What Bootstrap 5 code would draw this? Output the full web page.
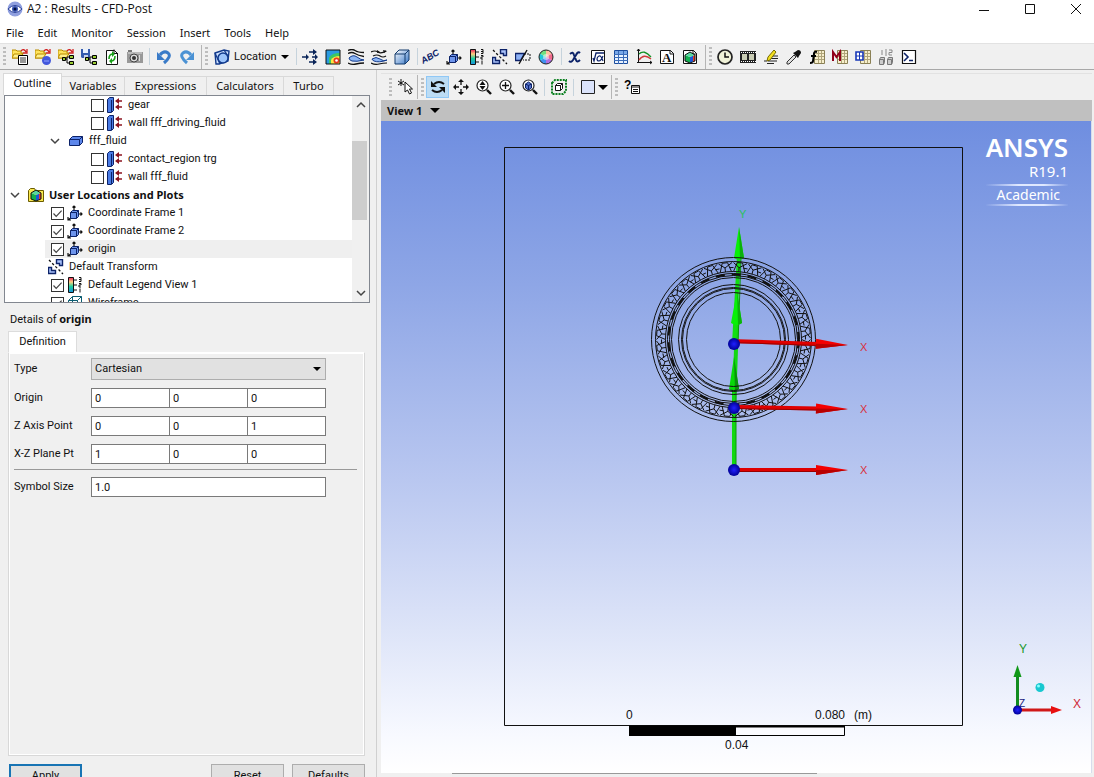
<!DOCTYPE html>
<html lang="en">
<head>
<meta charset="utf-8">
<meta name="viewport" content="width=device-width, initial-scale=1">
<title>A2 : Results - CFD-Post</title>
<link href="https://cdn.jsdelivr.net/npm/bootstrap@5.3.0/dist/css/bootstrap.min.css" rel="stylesheet">
<style>
body{font-family:Roboto,"Noto Sans",sans-serif;font-size:11px;line-height:18px;color:#111;background:#f0f0f0}
button,input,select{font:inherit;color:inherit}
strong,.boldface{font-family:"Noto Sans",sans-serif;font-weight:700}
.titlebar{height:20px;padding:0 8px 2px 7px;font-family:"Open Sans",sans-serif;font-size:12px}
.titlebar button{width:20px;height:16px}
.winbuttons{gap:26px}
.menubar{height:23px;padding:3px 0 0 6px;gap:15px;font-family:"Noto Sans",sans-serif}
.menubar a{color:#111;text-decoration:none}
.menubar{gap:14px}
.flat{border:0;background:none;padding:0;border-radius:0}
.toolbar{height:27px;border-top:1px solid #e2e2e2}
.maintools{border-bottom:1px solid #a8a8a8}
.grip{width:3px;height:19px;margin:0 2px 0 3px;background:repeating-linear-gradient(#bdbdbd 0 2px,transparent 2px 4px)}
.tool{width:23px;height:22px;display:flex;align-items:center;justify-content:center}
.tool svg,.treerow svg.ic{width:16px;height:16px;display:block;flex:none}
.tool.active-tool{background:#bcdcf4;border:1px solid #90c8f6}
.layoutbtn{gap:2px}
.sep{width:1px;height:17px;margin:0 2px 0 3px;background:#c6d3dc}
.edge{width:1px;height:24px;margin-left:3px;background:#b5b5b5}
.caret{width:0;height:0;border:5px solid transparent;border-top-color:#000;border-bottom:0}
.caret-sm{border-width:4px;border-bottom:0}
.leftpane{width:377px;padding:3px 5px 0 3px;border-right:1px solid #d0d0d0;flex:none}
.tabstrip{height:22px;font-family:"Noto Sans",sans-serif}
.tabstrip button{height:19px;border:1px solid #d9d9d9;border-left-width:0;border-bottom:0;background:#f0f0f0}
.tabstrip button.current{height:22px;background:#fff;border-left-width:1px;padding-bottom:3px}
.tree{height:208px;margin:0 1px;border:1px solid #828790;background:#fff;overflow:hidden}
.treerow{height:18px;white-space:nowrap}
.treerow svg.ic{margin:0 5px 0 3px}
.lv-root{padding-left:5px}.lv-group{padding-left:45px}.lv-leaf{padding-left:86px}.lv-item{padding-left:46px}.lv-free{padding-left:40px}
.chev{width:10px;height:10px;margin-right:5px;flex:none}
.selected-row{background:linear-gradient(90deg,transparent 40px,#efefef 40px)}
.treerow input{appearance:none;width:13px;height:13px;margin:0;border:1px solid #333;background:#fff;flex:none}
.treerow input:checked{background:#fff url("data:image/svg+xml,%3Csvg xmlns='http://www.w3.org/2000/svg' viewBox='0 0 11 11'%3E%3Cpath d='M1.5 5.5 4.2 8.3 9.6 2.6' fill='none' stroke='%23444' stroke-width='1.2'/%3E%3C/svg%3E")}
.scroller{width:17px;background:#f0f0f0;flex:none}
.scroller svg{width:10px;height:10px;margin:4px auto}
.thumb{width:15px;height:79px;margin-top:27px;background:#cdcdcd}
.detailhead{padding:7px 0 2px 7px}
.deftab{width:69px;height:21px;margin-left:5px;background:#fff;border:1px solid #dcdcdc;border-bottom:0}
.detailbox{margin:0 6px 0 5px;border:1px solid #d8d8d8;border-top-color:#fff;box-shadow:inset 1px 1px #fff,inset -1px -1px #fff;padding:5px 7px 0 5px}
.formrow{margin-bottom:8px;min-height:20px}
.formrow label{width:77px}
.fields{width:235px}
.fields input{height:20px;min-width:0;border:1px solid #7a7a7a;border-radius:0;padding:0 3px;background:#fff}
.fields input+input{margin-left:-1px}
.fields select{appearance:none;height:22px;width:100%;border:1px solid #adadad;border-radius:0;padding:0 3px;background:#e1e1e1}
.pick{right:5px;top:9px}
.rule{height:1px;background:#999;margin:-3px 0 7px}
.actions{height:21px;padding:8px 6px 0 6px;overflow:hidden;flex:none}
.actions button{width:73px;height:24px;border:1px solid #adadad;background:#e1e1e1;flex:none}
.actions .primary{border:2px solid #1874b4}
.rightpane{margin-left:4px;margin-right:2px;padding-top:3px}
.viewbar{height:21px;background:#c0c0c0;padding-left:6px}
.scene{background:linear-gradient(#6f8ee0 0%,#8ea6e6 25%,#b9c7f0 55%,#dde4f8 78%,#f7f9ff 94%,#fff 100%);border-right:1px solid #d8dcec;overflow:hidden}
.scene svg text{font-family:"Liberation Sans",sans-serif}
.brand{top:10px;right:23px;color:#fff;font-family:"Noto Sans",sans-serif;text-align:right}
.brand .bname{font-size:26px;font-weight:600;line-height:32px}
.brand .bver{font-size:15px;line-height:17px}
.brand .bedition{font-size:14px;line-height:18px;margin-top:4px;padding:0 8px;border:solid;border-width:2px 0;border-image:linear-gradient(90deg,transparent,#dfe8ff 40%,#dfe8ff 70%,transparent) 1}
.sheets{height:4px;background:linear-gradient(90deg,transparent 71px,#efefef 71px)}
.sheets div{margin-left:71px;width:365px;height:1px;background:#999}
</style>
</head>
<body class="vh-100 overflow-hidden d-flex flex-column">
<svg width="0" height="0" class="position-absolute" aria-hidden="true">
<defs>
<linearGradient id="rain" x2="0" y2="1"><stop stop-color="#e8205a"/><stop offset=".3" stop-color="#ffd080"/><stop offset=".6" stop-color="#20d0a0"/><stop offset="1" stop-color="#1890e0"/></linearGradient>
<linearGradient id="cubeg" x2="1" y2="1"><stop stop-color="#fff"/><stop offset="1" stop-color="#3878c8"/></linearGradient>
<symbol id="folder" viewBox="0 0 16 16"><path d="M0 9V1h4l1 1h4v2h2L8 9z" fill="#ffe45c" stroke="#b98b00"/><path d="M2 5h9L8 9H0z" fill="#fff08a" stroke="#b98b00"/><path d="M9 2q3-3 5 1M15 0v4h-4" fill="none" stroke="#d02020" stroke-width="1.3"/></symbol>
<symbol id="i-open" viewBox="0 0 16 16"><use href="#folder"/><path d="M6.500 6.500h9v9h-9z" fill="#fff" stroke="#000"/><path d="M8 9h6M8 11h6M8 13h6" stroke="#333"/></symbol>
<symbol id="i-openball" viewBox="0 0 16 16"><use href="#folder"/><circle cx="11.500" cy="11.500" r="4.500" fill="#4358dc"/><path d="M9 12h5" stroke="#93a4ff"/></symbol>
<symbol id="nodes" viewBox="0 0 16 16"><path d="M5 10h4M9 8v6M9 8h3M9 14h3" stroke="#000" fill="none"/><path d="M4.500 8.500h3v3h-3zM11.500 6.500h4v3h-4zM11.500 12.500h4v3h-4z" fill="#9c3" stroke="#000"/></symbol>
<symbol id="i-opentree" viewBox="0 0 16 16"><use href="#folder"/><use href="#nodes"/></symbol>
<symbol id="i-savetree" viewBox="0 0 16 16"><path d="M0 0h9v9H1L0 8z" fill="#355cae"/><path d="M2 0h5v4H2z" fill="#e9f2ff"/><path d="M3 6h4v3H3z" fill="#c8d4ea"/><use href="#nodes"/></symbol>
<symbol id="i-reload" viewBox="0 0 16 16"><path d="M2.500 1.500h8l3 3v11h-11z" fill="#fff" stroke="#111"/><path d="M10 .500v4h4" fill="none" stroke="#111"/><path d="M5 10q0-5 4-5M11 7q0 5-4 5" fill="none" stroke="#18a018" stroke-width="1.600"/><path d="M8 2l3 3-3 3zM8 9l-3 3 3 3z" fill="#18a018"/></symbol>
<symbol id="i-camera" viewBox="0 0 16 16"><path d="M0 3h16v11H0z" fill="#999"/><path d="M1 1h4v2H1z" fill="#777"/><path d="M1 4h14M12.500 6v6" stroke="#ddd"/><circle cx="7" cy="9" r="4" fill="#ddd" stroke="#444"/><circle cx="7" cy="9" r="2" fill="#333"/></symbol>
<symbol id="i-undo" viewBox="0 0 16 16"><path d="M4 6q4-5 8-2t-4 10" fill="none" stroke="#3a7bc8" stroke-width="3"/><path d="M1 3v8h8z" fill="#3a7bc8"/></symbol>
<symbol id="i-redo" viewBox="0 0 16 16"><path d="M12 6Q8 1 4 4t4 10" fill="none" stroke="#4b92d4" stroke-width="3"/><path d="M15 3v8H7z" fill="#4b92d4"/></symbol>
<symbol id="i-location" viewBox="0 0 16 16"><path d="M1 4l9-3 5 1-1 10-9 3H2z" fill="#cfe2ff" stroke="#123a8c" stroke-width="1.400"/><path d="M1 4l5 11M10 1l4 6" stroke="#123a8c" stroke-width="1.300"/><circle cx="9" cy="9" r="5" fill="#9cc4fa" stroke="#123a8c" stroke-width="1.500"/></symbol>
<symbol id="i-vector" viewBox="0 0 16 16"><path d="M0 8h5M7 3h5M10 8h4M7 13h5" stroke="#0a2458" stroke-width="1.600"/><path d="M4 5l3 3-3 3zM11 0l4 3-4 3zM13 5l3 3-3 3zM11 10l4 3-4 3z" fill="#0a2458"/></symbol>
<symbol id="i-contour" viewBox="0 0 16 16"><path d="M1 1h14v14H1z" fill="#2a9be0"/><path d="M4 15V9q2-5 11-5v11z" fill="#3cc860"/><path d="M6 15v-4q2-4 9-4v8z" fill="#ffe440"/><circle cx="11.500" cy="11.500" r="3" fill="#e83820"/><circle cx="11.500" cy="11.500" r="1.300" fill="#fff"/><path d="M1 1h14v14H1z" fill="none" stroke="#111"/></symbol>
<symbol id="i-stream" viewBox="0 0 16 16"><path d="M0 1.500q4-2 7 0t9 2M0 4.500q4-2 7 0t9 3M0 14q4 2 8 1t8-1" fill="none" stroke="#111" stroke-width="1.300"/><path d="M1 9q4-4 8-1t7 3q-8 2-12 1-3-1-3-3z" fill="#8db6f4" stroke="#123a8c"/></symbol>
<symbol id="i-particle" viewBox="0 0 16 16"><path d="M0 3q4-2 7 0t8-1M2 7q4-2 7 0t6 0M0 14q4 2 8 1t8-1" fill="none" stroke="#111" stroke-width="1.200"/><path d="M6 1l3 2-3 1zM12 1l4 1-3 2z" fill="#111"/><path d="M1 10q4-3 8 0t7 1q-8 3-13 1-2-1-2-2z" fill="#8db6f4" stroke="#123a8c"/></symbol>
<symbol id="i-volume" viewBox="0 0 16 16"><path d="M1 5l4-4h10v10l-4 4H1z" fill="url(#cubeg)" stroke="#123a6c"/><path d="M1 5h10v10M11 5l4-4" fill="none" stroke="#123a6c"/></symbol>
<symbol id="i-frame" viewBox="0 0 16 16"><path d="M7 6V1M10 9h5M5 12l-4 3M5.500 2.500L7 1l1.500 1.500M13.500 7.500L15 9l-1.500 1.500M1 12v3h3" fill="none" stroke="#111" stroke-width="1.200"/><path d="M3.500 7.500l2-2h6v6l-2 2h-6z" fill="#6d94ec" stroke="#0c2268"/><path d="M3.500 7.500h6v6M9.500 7.500l2-2" fill="none" stroke="#0c2268"/></symbol>
<symbol id="i-legend" viewBox="0 0 16 16"><path d="M1.500.500h5v15h-5z" fill="url(#rain)" stroke="#111"/><path d="M7 3h3M7 8h3M7 13h3M12 .500h2v4h-2M12 2.500h2M12 6.500h2v1.500h-2v2h2M13 11.500v4" stroke="#111" fill="none"/></symbol>
<symbol id="i-transform" viewBox="0 0 16 16"><path d="M1 1l14 14" stroke="#111" stroke-width="1.300" stroke-dasharray="2.500 2"/><path d="M8.500.500h6v6h-3v-2h-3zM.500 8.500h3v3h4v3h-7z" fill="#a9c2fa" stroke="#0c2268" stroke-width="1.400"/></symbol>
<symbol id="i-clip" viewBox="0 0 16 16"><path d="M9 5h6v6H8" fill="none" stroke="#111" stroke-dasharray="2 1"/><path d="M.500 4.500h9l-4 7h-5z" fill="#8cb0f4" stroke="#0c2268" stroke-width="1.300"/><path d="M12 1L4 15" stroke="#111" stroke-width="1.400"/></symbol>
<symbol id="i-color" viewBox="0 0 16 16"><path d="M8 8V1a7 7 0 0 1 6 3.500z" fill="#ffc0a0"/><path d="M8 8l6-3.500a7 7 0 0 1 0 7z" fill="#f26a8c"/><path d="M8 8l6 3.500A7 7 0 0 1 8 15z" fill="#b070e0"/><path d="M8 8v7a7 7 0 0 1-6-3.500z" fill="#4090f0"/><path d="M8 8l-6 3.500a7 7 0 0 1 0-7z" fill="#20c8d8"/><path d="M8 8L2 4.500A7 7 0 0 1 8 1z" fill="#70e080"/><circle cx="8" cy="8" r="3" fill="#fff" opacity=".5"/><circle cx="8" cy="8" r="7" fill="none" stroke="#222"/></symbol>
<symbol id="i-varx" viewBox="0 0 16 16"><path d="M3 5q3-3 4 1l2 5q1 3 4 0M13 4q-2-2-4 2l-3 5q-2 3-4 1" fill="none" stroke="#0c2268" stroke-width="2"/></symbol>
<symbol id="i-func" viewBox="0 0 16 16"><path d="M1.500 1.500h13v13h-13z" fill="#fff" stroke="#111"/><path d="M3 9l1 3 2-8h8" fill="none" stroke="#0c2268" stroke-width="1.300"/><path d="M13 7q-2 5-4 5t-2-2 2-3 4 5" fill="none" stroke="#0c2268" stroke-width="1.200"/></symbol>
<symbol id="i-table" viewBox="0 0 16 16"><path d="M1.500 1.500h13v13h-13z" fill="#e8f2ff" stroke="#1b4c9c"/><path d="M2 2h12v3H2z" fill="#79a8e8"/><path d="M1 5.500h14M1 8.500h14M1 11.500h14M5.500 2v13M10.500 2v13" stroke="#3b6cb8"/></symbol>
<symbol id="i-chart" viewBox="0 0 16 16"><path d="M2.500 0v14M1 13.500h15" stroke="#111"/><path d="M3 5q5-5 12 3" fill="none" stroke="#149024" stroke-width="1.300"/><path d="M3 11q5-7 12-1" fill="none" stroke="#d03838" stroke-width="1.300"/><path d="M1 2l1.500-2L4 2M14 12l2 1.500L14 15" fill="none" stroke="#111"/></symbol>
<symbol id="i-page" viewBox="0 0 16 16"><path d="M1.500 1.500h10l3 3v10h-13z" fill="#fff" stroke="#111"/><path d="M11 1v4h4" fill="none" stroke="#111"/></symbol>
<symbol id="colorcube" viewBox="0 0 16 16"><path d="M3 6l5 2v6l-5-2z" fill="#12b050"/><path d="M8 8l3-1.500v6L8 14z" fill="#1a58d8"/><path d="M11 6.500l2-.500v6l-2 .500z" fill="#e83828"/><path d="M3 6l5-3 5 3-5 2z" fill="#58d8a0"/><path d="M3 6l5-3 5 3v6l-5 2-5-2z" fill="none" stroke="#111"/></symbol>
<symbol id="i-figure" viewBox="0 0 16 16"><use href="#i-page"/><use href="#colorcube"/></symbol>
<symbol id="i-clock" viewBox="0 0 16 16"><circle cx="8" cy="8" r="7" fill="#f0f2d8" stroke="#222" stroke-width="1.700"/><path d="M8 3.500V8h4" fill="none" stroke="#111" stroke-width="1.500"/></symbol>
<symbol id="i-film" viewBox="0 0 16 16"><path d="M0 2h16v12H0z" fill="#222"/><path d="M2 5h5v6H2zM9 5h5v6H9z" fill="#c9ccb4"/><path d="M1 3.500h15M1 12.500h15" stroke="#fff" stroke-dasharray="1 1"/></symbol>
<symbol id="i-note" viewBox="0 0 16 16"><path d="M8 7h7M7 9.500h8M5 12h9M1 12h3M4 14.500h7" stroke="#222" stroke-width="1.200"/><path d="M11 1l2 2-6 8-3 1 1-4z" fill="#f4e020" stroke="#776b00"/></symbol>
<symbol id="i-dropper" viewBox="0 0 16 16"><path d="M8 6l2 2-7 7H1v-2z" fill="#ddd" stroke="#333"/><path d="M7 4l5 5 1-2 2-3q0-3-3-3L9 3z" fill="#111"/></symbol>
<symbol id="grid" viewBox="0 0 16 16"><path d="M5.500 1.500h10v13h-10z" fill="#f6eecb" stroke="#8a8055"/><path d="M6 4.500h9M6 7.500h9M6 10.500h9M9.500 2v12M12.500 2v12" stroke="#b0a57a"/></symbol>
<symbol id="i-fgrid" viewBox="0 0 16 16"><use href="#grid"/><path d="M8 3q-3-1-3 2L4 12q0 2-3 2M2 7h5" fill="none" stroke="#000" stroke-width="2"/></symbol>
<symbol id="i-mgrid" viewBox="0 0 16 16"><use href="#grid"/><path d="M1 12V3l3.500 5L8 3v9" fill="none" stroke="#900018" stroke-width="2"/></symbol>
<symbol id="i-bgrid" viewBox="0 0 16 16"><use href="#grid"/><path d="M1 3h7v8H1z" fill="#fff" stroke="#1838b8" stroke-width="1.600"/><path d="M1 7h7M4.500 3v8" stroke="#1838b8"/></symbol>
<symbol id="i-compare" viewBox="0 0 16 16"><path d="M8 0v7M4 1v5M11 1h3v2.500h-3V6h3" fill="none" stroke="#888"/><path d="M1.500 10.500l1-2h4v5l-1 2h-4zM9.500 10.500l1-2h4v5l-1 2h-4z" fill="#ccc" stroke="#777"/><path d="M1.500 10.500h4v5M9.500 10.500h4v5" fill="none" stroke="#777"/></symbol>
<symbol id="i-console" viewBox="0 0 16 16"><path d="M1.500 1.500h13v13h-13z" fill="#fff" stroke="#111" stroke-width="1.200"/><path d="M3 4l4 4-4 4M8 11.500h4" fill="none" stroke="#0c2268" stroke-width="1.600"/></symbol>
<symbol id="i-pick" viewBox="0 0 16 16"><path d="M3 0v7M0 2l6 4M6 2L0 6" stroke="#111"/><path d="M7 3v10l2.500-2 2 4 2-1-2-4h3z" fill="#fff" stroke="#111"/></symbol>
<symbol id="i-rotate" viewBox="0 0 16 16"><path d="M4 5q5-4 10 0M12 11q-5 4-10 0" fill="none" stroke="#111" stroke-width="2"/><path d="M1 2v6h6zM15 14V8H9z" fill="#111"/></symbol>
<symbol id="i-pan" viewBox="0 0 16 16"><path d="M8 1v5M8 10v5M1 8h5M10 8h5" stroke="#111" stroke-width="1.300"/><path d="M8 0l3 3H5zM8 16l3-3H5zM0 8l3-3v6zM16 8l-3-3v6z" fill="#111"/></symbol>
<symbol id="lens" viewBox="0 0 16 16"><circle cx="6.500" cy="6.500" r="5.500" fill="#fff" stroke="#222" stroke-width="1.200"/><path d="M11 11l4 4" stroke="#111" stroke-width="2.400"/></symbol>
<symbol id="i-zoom" viewBox="0 0 16 16"><use href="#lens"/><path d="M6.500 2l3 4h-6zM6.500 11l3-4h-6z" fill="#111"/></symbol>
<symbol id="i-zoombox" viewBox="0 0 16 16"><use href="#lens"/><path d="M3 6.500h7M6.500 3v7" stroke="#111" stroke-width="1.300"/></symbol>
<symbol id="i-fit" viewBox="0 0 16 16"><use href="#lens"/><path d="M3.500 5l3-2 3 2v4l-3 2-3-2z" fill="#5471c8" stroke="#0c2268"/><path d="M3.500 5l3 1.500 3-1.500M6.500 6.500V11" stroke="#0c2268" fill="none"/></symbol>
<symbol id="i-highlight" viewBox="0 0 16 16"><path d="M1 4l3-3h11v11l-3 3H1z" fill="none" stroke="#0b8020" stroke-width="2" stroke-dasharray="2 1"/><path d="M4.500 6.500l2-2h5v5l-2 2h-5zM4.500 6.500h5v5M9.500 6.500l2-2" fill="#fff" stroke="#111"/></symbol>
<symbol id="i-wall" viewBox="0 0 16 16"><path d="M.500 2.500l2-2h4v13l-2 2h-4z" fill="#4a7be4" stroke="#0c2268"/><path d="M4.500 3v12" stroke="#0c2268"/><path d="M10 4h5M10 10h5" stroke="#8c1420" stroke-width="1.500"/><path d="M8 4l4-3v6zM8 10l4-3v6z" fill="#8c1420"/></symbol>
<symbol id="i-domain" viewBox="0 0 16 16"><path d="M1.500 6.500l3-3h10v6l-3 3h-10z" fill="#5c86ea" stroke="#0c2268"/><path d="M1.500 6.500h10v6M11.500 6.500l3-3" fill="none" stroke="#0c2268"/></symbol>
<symbol id="i-userloc" viewBox="0 0 16 16"><path d="M.500 14.500v-11l2-2h4l1 2h8v11z" fill="#fbe84e" stroke="#6b5c00"/><use href="#colorcube"/></symbol>
<symbol id="i-wire" viewBox="0 0 16 16"><path d="M1.500 5.500l4-4h9v9l-4 4h-9zM1.500 5.500h9v9M10.500 5.500l4-4M5.500 1.500v9h9M5.500 10.500l-4 4" fill="none" stroke="#0a5c70"/></symbol>
<symbol id="chev-down" viewBox="0 0 10 10"><path d="M1 3l4 4 4-4" fill="none" stroke="#444" stroke-width="1.500"/></symbol>
<symbol id="arrow-x" viewBox="0 0 120 20"><path d="M4 8h80v4H4z" fill="#e00000"/><path d="M4 11h80v1H4z" fill="#900"/><path d="M82 5l32 5-32 5z" fill="#f40000"/><path d="M82 10h32l-32 5z" fill="#b80000"/></symbol>
<radialGradient id="ball"><stop stop-color="#2020ff"/><stop offset="1" stop-color="#000098"/></radialGradient>
</defs>
</svg>

<header class="bg-white">
<div class="titlebar d-flex align-items-center">
<svg width="16" height="16" viewBox="0 0 16 16" class="me-1"><circle cx="8" cy="8" r="7.500" fill="#8f9fdf"/><path d="M1 8q7-7 14 0-7 7-14 0z" fill="#fff" stroke="#283f98"/><circle cx="8" cy="8" r="3" fill="#3b56b4"/><circle cx="8" cy="8" r="1.500" fill="#001040"/></svg>
<span>A2 : Results - CFD-Post</span>
<div class="winbuttons ms-auto d-flex">
<button class="flat d-flex align-items-center justify-content-center" aria-label="Minimize"><svg width="12" height="12"><path d="M1 7.500h10" stroke="#111"/></svg></button>
<button class="flat d-flex align-items-center justify-content-center" aria-label="Maximize"><svg width="12" height="12"><path d="M1.500 1.500h9v9h-9z" fill="none" stroke="#111"/></svg></button>
<button class="flat d-flex align-items-center justify-content-center" aria-label="Close"><svg width="12" height="12"><path d="M1 1l10 10M11 1L1 11" stroke="#111"/></svg></button>
</div>
</div>
<nav class="menubar d-flex align-items-center"><a href="#">File</a><a href="#">Edit</a><a href="#">Monitor</a><a href="#">Session</a><a href="#">Insert</a><a href="#">Tools</a><a href="#">Help</a></nav>
</header>

<div class="toolbar maintools d-flex align-items-center flex-shrink-0" role="toolbar" aria-label="Main">
<span class="grip"></span>
<button class="flat tool" aria-label="Load results"><svg><use href="#i-open"/></svg></button>
<button class="flat tool" aria-label="Load state"><svg><use href="#i-openball"/></svg></button>
<button class="flat tool" aria-label="Load tree"><svg><use href="#i-opentree"/></svg></button>
<button class="flat tool" aria-label="Save state"><svg><use href="#i-savetree"/></svg></button>
<button class="flat tool" aria-label="Refresh"><svg><use href="#i-reload"/></svg></button>
<button class="flat tool" aria-label="Save picture"><svg><use href="#i-camera"/></svg></button>
<span class="sep"></span>
<button class="flat tool" aria-label="Undo"><svg><use href="#i-undo"/></svg></button>
<button class="flat tool" aria-label="Redo"><svg><use href="#i-redo"/></svg></button>
<span class="edge"></span><span class="grip"></span>
<button class="flat tool w-auto px-1"><svg><use href="#i-location"/></svg><span class="mx-1">Location</span><span class="caret caret-sm"></span></button>
<span class="sep"></span>
<button class="flat tool" aria-label="Vector"><svg><use href="#i-vector"/></svg></button>
<button class="flat tool" aria-label="Contour"><svg><use href="#i-contour"/></svg></button>
<button class="flat tool" aria-label="Streamline"><svg><use href="#i-stream"/></svg></button>
<button class="flat tool" aria-label="Particle track"><svg><use href="#i-particle"/></svg></button>
<button class="flat tool" aria-label="Volume rendering"><svg><use href="#i-volume"/></svg></button>
<span class="sep"></span>
<button class="flat tool" aria-label="Text"><svg viewBox="0 0 16 16" overflow="visible"><text x="0" y="15" transform="rotate(-30 0 15)" font-family="Liberation Sans" font-weight="700" font-style="italic" font-size="9" fill="#0c2268">ABC</text></svg></button>
<button class="flat tool" aria-label="Coordinate frame"><svg><use href="#i-frame"/></svg></button>
<button class="flat tool" aria-label="Legend"><svg><use href="#i-legend"/></svg></button>
<button class="flat tool" aria-label="Instance transform"><svg><use href="#i-transform"/></svg></button>
<button class="flat tool" aria-label="Clip plane"><svg><use href="#i-clip"/></svg></button>
<button class="flat tool" aria-label="Color map"><svg><use href="#i-color"/></svg></button>
<span class="sep"></span>
<button class="flat tool" aria-label="Variable"><svg><use href="#i-varx"/></svg></button>
<button class="flat tool" aria-label="Expression"><svg><use href="#i-func"/></svg></button>
<button class="flat tool" aria-label="Table"><svg><use href="#i-table"/></svg></button>
<button class="flat tool" aria-label="Chart"><svg><use href="#i-chart"/></svg></button>
<button class="flat tool" aria-label="Comment"><svg viewBox="0 0 16 16"><use href="#i-page"/><text x="3" y="13" font-family="Liberation Serif" font-weight="700" font-size="13" fill="#111">A</text></svg></button>
<button class="flat tool" aria-label="Figure"><svg><use href="#i-figure"/></svg></button>
<span class="edge"></span><span class="grip"></span>
<button class="flat tool" aria-label="Timestep"><svg><use href="#i-clock"/></svg></button>
<button class="flat tool" aria-label="Animation"><svg><use href="#i-film"/></svg></button>
<button class="flat tool" aria-label="Quick editor"><svg><use href="#i-note"/></svg></button>
<button class="flat tool" aria-label="Probe"><svg><use href="#i-dropper"/></svg></button>
<button class="flat tool" aria-label="Function calculator"><svg><use href="#i-fgrid"/></svg></button>
<button class="flat tool" aria-label="Macro calculator"><svg><use href="#i-mgrid"/></svg></button>
<button class="flat tool" aria-label="Mesh calculator"><svg><use href="#i-bgrid"/></svg></button>
<button class="flat tool" aria-label="Case comparison"><svg><use href="#i-compare"/></svg></button>
<button class="flat tool" aria-label="Command editor"><svg><use href="#i-console"/></svg></button>
</div>

<div class="d-flex flex-grow-1" style="min-height:0">
<aside class="leftpane d-flex flex-column">
<div class="tabstrip d-flex align-items-end" role="tablist">
<button class="current rounded-0 p-0 pb-1" role="tab" style="width:59px">Outline</button>
<button class="rounded-0 p-0" role="tab" style="width:63px">Variables</button>
<button class="rounded-0 p-0" role="tab" style="width:82px">Expressions</button>
<button class="rounded-0 p-0" role="tab" style="width:77px">Calculators</button>
<button class="rounded-0 p-0" role="tab" style="width:50px">Turbo</button>
</div>
<div class="tree d-flex flex-shrink-0">
<div class="flex-grow-1">
<label class="treerow lv-leaf d-flex align-items-center"><input type="checkbox"><svg class="ic"><use href="#i-wall"/></svg>gear</label>
<label class="treerow lv-leaf d-flex align-items-center"><input type="checkbox"><svg class="ic"><use href="#i-wall"/></svg>wall fff_driving_fluid</label>
<div class="treerow lv-group d-flex align-items-center"><svg class="chev"><use href="#chev-down"/></svg><svg class="ic"><use href="#i-domain"/></svg>fff_fluid</div>
<label class="treerow lv-leaf d-flex align-items-center"><input type="checkbox"><svg class="ic"><use href="#i-wall"/></svg>contact_region trg</label>
<label class="treerow lv-leaf d-flex align-items-center"><input type="checkbox"><svg class="ic"><use href="#i-wall"/></svg>wall fff_fluid</label>
<div class="treerow lv-root d-flex align-items-center boldface"><svg class="chev"><use href="#chev-down"/></svg><svg class="ic"><use href="#i-userloc"/></svg>User Locations and Plots</div>
<label class="treerow lv-item d-flex align-items-center"><input type="checkbox" checked><svg class="ic"><use href="#i-frame"/></svg>Coordinate Frame 1</label>
<label class="treerow lv-item d-flex align-items-center"><input type="checkbox" checked><svg class="ic"><use href="#i-frame"/></svg>Coordinate Frame 2</label>
<label class="treerow lv-item selected-row d-flex align-items-center"><input type="checkbox" checked><svg class="ic"><use href="#i-frame"/></svg>origin</label>
<div class="treerow lv-free d-flex align-items-center"><svg class="ic"><use href="#i-transform"/></svg>Default Transform</div>
<label class="treerow lv-item d-flex align-items-center"><input type="checkbox" checked><svg class="ic"><use href="#i-legend"/></svg>Default Legend View 1</label>
<label class="treerow lv-item d-flex align-items-center"><input type="checkbox" checked><svg class="ic"><use href="#i-wire"/></svg>Wireframe</label>
</div>
<div class="scroller d-flex flex-column"><svg><path d="M1 7l4-4 4 4" fill="none" stroke="#444" stroke-width="1.500"/></svg><div class="thumb"></div><svg class="mt-auto"><use href="#chev-down"/></svg></div>
</div>
<div class="detailhead">Details of <strong>origin</strong></div>
<button class="deftab rounded-0 p-0" role="tab">Definition</button>
<form class="detailbox flex-grow-1">
<div class="formrow d-flex align-items-center"><label for="ftype">Type</label><div class="fields position-relative d-flex"><select id="ftype"><option>Cartesian</option></select><span class="caret caret-sm position-absolute pick"></span></div></div>
<div class="formrow d-flex align-items-center"><label for="ox">Origin</label><div class="fields d-flex"><input id="ox" class="w-100" value="0"><input aria-label="Origin Y" class="w-100" value="0"><input aria-label="Origin Z" class="w-100" value="0"></div></div>
<div class="formrow d-flex align-items-center"><label for="zx">Z Axis Point</label><div class="fields d-flex"><input id="zx" class="w-100" value="0"><input aria-label="Z axis Y" class="w-100" value="0"><input aria-label="Z axis Z" class="w-100" value="1"></div></div>
<div class="formrow d-flex align-items-center"><label for="px">X-Z Plane Pt</label><div class="fields d-flex"><input id="px" class="w-100" value="1"><input aria-label="Plane Y" class="w-100" value="0"><input aria-label="Plane Z" class="w-100" value="0"></div></div>
<div class="rule"></div>
<div class="formrow d-flex align-items-center"><label for="ssz">Symbol Size</label><div class="fields d-flex"><input id="ssz" class="w-100" value="1.0"></div></div>
</form>
<div class="actions d-flex gap-2"><button class="primary me-auto rounded-0 p-0">Apply</button><button class="rounded-0 p-0">Reset</button><button class="rounded-0 p-0">Defaults</button></div>
</aside>

<main class="rightpane flex-grow-1 d-flex flex-column" style="min-width:0">
<div class="toolbar d-flex align-items-center flex-shrink-0" role="toolbar" aria-label="View">
<span class="grip ms-2"></span>
<button class="flat tool" aria-label="Select"><svg><use href="#i-pick"/></svg></button>
<span class="edge ms-0"></span><span class="grip"></span>
<button class="flat tool active-tool" aria-label="Rotate"><svg><use href="#i-rotate"/></svg></button>
<button class="flat tool" aria-label="Pan"><svg><use href="#i-pan"/></svg></button>
<button class="flat tool" aria-label="Zoom"><svg><use href="#i-zoom"/></svg></button>
<button class="flat tool" aria-label="Zoom box"><svg><use href="#i-zoombox"/></svg></button>
<button class="flat tool" aria-label="Fit view"><svg><use href="#i-fit"/></svg></button>
<span class="sep"></span>
<button class="flat tool" aria-label="Highlighting"><svg><use href="#i-highlight"/></svg></button>
<span class="sep"></span>
<button class="flat tool layoutbtn w-auto ps-1" aria-label="Viewport layout"><svg viewBox="0 0 16 16"><path d="M1.500 1.500h13v13h-13z" fill="#dbe3fa" stroke="#222"/></svg><span class="caret"></span></button>
<span class="edge"></span><span class="grip"></span>
<button class="flat tool" aria-label="Help"><svg viewBox="0 0 16 16"><text x="0" y="10" font-family="Liberation Sans" font-weight="700" font-size="12">?</text><path d="M7.500 6.500h8v8h-8z" fill="#fff" stroke="#111"/><path d="M8 8h8M9 10.500h5M9 12.500h5" stroke="#111"/></svg></button>
</div>
<div class="viewbar boldface d-flex align-items-center flex-shrink-0">View 1<span class="caret ms-2"></span></div>
<div class="scene position-relative flex-grow-1" style="min-height:0">
<svg class="d-block w-100 h-100" viewBox="0 0 710 652" fill="none">
<path d="M123.500 26.500h458v578h-458z" stroke="#111"/>
<g id="yaxes">
<path d="M353 349V264" stroke="#12d812" stroke-width="4"/><path d="M353 287L356 198" stroke="#12d812" stroke-width="4"/><path d="M353 223L358 134" stroke="#12e012" stroke-width="4"/>
<path d="M355 349V266M357 223L360 136" stroke="#0a9a0a"/>
<path d="M358 106l5 31q-5 3-10 0z" fill="#08f008"/><path d="M358 106l5 31-4 1z" fill="#0bb00b"/>
<path d="M356 170l5 32q-5 4-11 0z" fill="#08f008"/><path d="M356 170l5 32-4 2z" fill="#0bb00b"/>
<path d="M353 236l5 32q-5 4-10 0z" fill="#08d808"/><path d="M353 236l5 32-4 2z" fill="#0a900a"/>
</g>
<g id="gear" stroke="#111" stroke-width="1"></g>
<g><use href="#arrow-x" x="353" y="339" width="120" height="20"/><use href="#arrow-x" x="353" y="276" width="120" height="20" transform="rotate(1 353 286)"/><use href="#arrow-x" x="353" y="210" width="120" height="20" transform="rotate(2 353 220)"/></g>
<g fill="url(#ball)"><circle cx="353" cy="223" r="6"/><circle cx="353" cy="287" r="6"/><circle cx="353" cy="349" r="6"/></g>
<g fill="#d8303c" font-size="11"><text x="479" y="230">X</text><text x="479" y="292">X</text><text x="479" y="353">X</text></g>
<text x="358" y="97" fill="#2cc060" font-size="11">Y</text>
<path d="M248.500 605.500h215v9h-215z" fill="#fafbff" stroke="#000"/><path d="M248 605h107v10H248z" fill="#000"/><path d="M248 605.500h216" stroke="#000" stroke-width="2"/>
<g fill="#111" font-size="12"><text x="245" y="598">0</text><text x="434" y="598">0.080</text><text x="473" y="598">(m)</text><text x="344" y="628">0.04</text></g>
<g id="triad"><path d="M636.500 588v-38" stroke="#128c20" stroke-width="3"/><path d="M636.500 544l4 12h-8z" fill="#109818"/><path d="M637 589h35" stroke="#d01818" stroke-width="3"/><path d="M681 589l-11-4v8z" fill="#e81010"/><circle cx="636.500" cy="589" r="4.500" fill="url(#ball)"/><circle cx="659" cy="566.500" r="4.500" fill="#18c8d0"/><circle cx="657.500" cy="565" r="1.500" fill="#8ff"/><g font-size="12"><text x="638" y="532" fill="#189828">Y</text><text x="692" y="587" fill="#d02838">X</text><text x="638" y="586" font-size="10" fill="#182080">Z</text></g></g>
</svg>
<div class="brand position-absolute"><div class="bname">ANSYS</div><div class="bver">R19.1</div><div class="bedition">Academic</div></div>
</div>
<div class="sheets flex-shrink-0"><div></div></div>
</main>
</div>
<script>
// Wireframe of the gear: concentric edges and a ring of tooth facets.
(function(){
  var cx=352.5, cy=218.5, out='';
  [82,78,68,66,64,62,55,52,51,47].forEach(function(r){out+='<circle cx="'+cx+'" cy="'+cy+'" r="'+r+'"/>';});
  out+='<circle cx="'+cx+'" cy="'+cy+'" r="65" stroke-width="2" stroke-dasharray="9 7"/>';
  function p(r,a){return (cx+r*Math.cos(a)).toFixed(1)+' '+(cy+r*Math.sin(a)).toFixed(1);}
  var n=32, s=2*Math.PI/n, d='';
  for(var i=0;i<n;i++){
    var a=i*s;
    d+='M'+p(68,a)+'L'+p(77,a+s*.25)+'L'+p(77,a+s*.6)+'L'+p(68,a+s*.85);
    d+='M'+p(77,a)+'L'+p(72,a+s*.4)+'L'+p(68,a+s*.4)+'M'+p(72,a+s*.4)+'L'+p(77,a+s*.9)+'M'+p(72,a+s*.7)+'L'+p(72,a+s);
  }
  out+='<path d="'+d+'"/>';
  document.getElementById('gear').innerHTML=out;
})();
</script>
<script src="https://cdn.jsdelivr.net/npm/bootstrap@5.3.0/dist/js/bootstrap.bundle.min.js"></script>
</body>
</html>
